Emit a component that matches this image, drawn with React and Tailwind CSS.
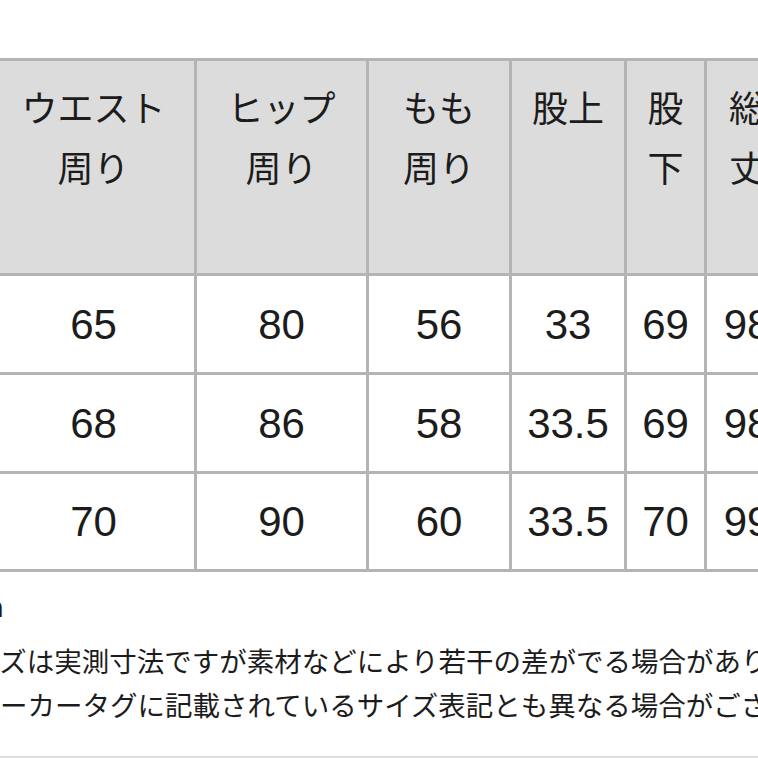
import React from 'react';

const headers = [
  ['サイズ', ''],
  ['ウエスト', '周り'],
  ['ヒップ', '周り'],
  ['もも', '周り'],
  ['股上', ''],
  ['股', '下'],
  ['総', '丈'],
];

const rows = [
  ['S', '65', '80', '56', '33', '69', '98'],
  ['M', '68', '86', '58', '33.5', '69', '98'],
  ['L', '70', '90', '60', '33.5', '70', '99'],
];

const rowHeights = ['h-[96px]', 'h-[96px]', 'h-[95px]'];

const jp = { fontFamily: '"Noto Sans CJK JP", "Noto Sans", sans-serif' };
const num = { fontFamily: '"Liberation Sans", "Noto Sans CJK JP", sans-serif' };

const SizeTable = () => {
  return (
    <div
      className="ml-[-133px] mt-[58px] grid w-max grid-cols-[120px_201px_169px_140px_112px_77px_80px] gap-[3px] bg-[#b4b4b4] p-[3px]"
    >
      {headers.map((h, i) => (
        <div
          key={i}
          className="h-[212px] bg-[#dcdcdc] pt-[15px] text-center text-[36px] leading-[60px] text-[#1c1c1c]"
          style={jp}
        >
          {h[0]}
          {h[1] && <br />}
          {h[1]}
        </div>
      ))}
      {rows.map((r, ri) =>
        r.map((v, ci) => (
          <div
            key={ri + '-' + ci}
            className={`${rowHeights[ri]} flex items-center justify-center bg-white text-[42px] text-[#1c1c1c]`}
            style={num}
          >
            {v}
          </div>
        ))
      )}
    </div>
  );
};

const App = () => {
  return (
    <div className="flex h-[758px] w-[758px] flex-col overflow-hidden bg-white">
      <SizeTable />
      <div className="mt-[11px] text-[27.5px] leading-[44px] text-[#1c1c1c]" style={jp}>
        <div className="ml-[-196px] w-[200px] whitespace-nowrap text-right">単位：cm</div>
        <div className="mt-[11px] ml-[-55px] whitespace-nowrap">
          サイズは実測寸法ですが素材などにより若干の差がでる場合があります。
        </div>
        <div className="ml-[-55px] whitespace-nowrap">
          ※メーカータグに記載されているサイズ表記とも異なる場合がございます。
        </div>
      </div>
      <div className="mt-auto h-[2px] bg-[#dedede]"></div>
    </div>
  );
};

export default App;
